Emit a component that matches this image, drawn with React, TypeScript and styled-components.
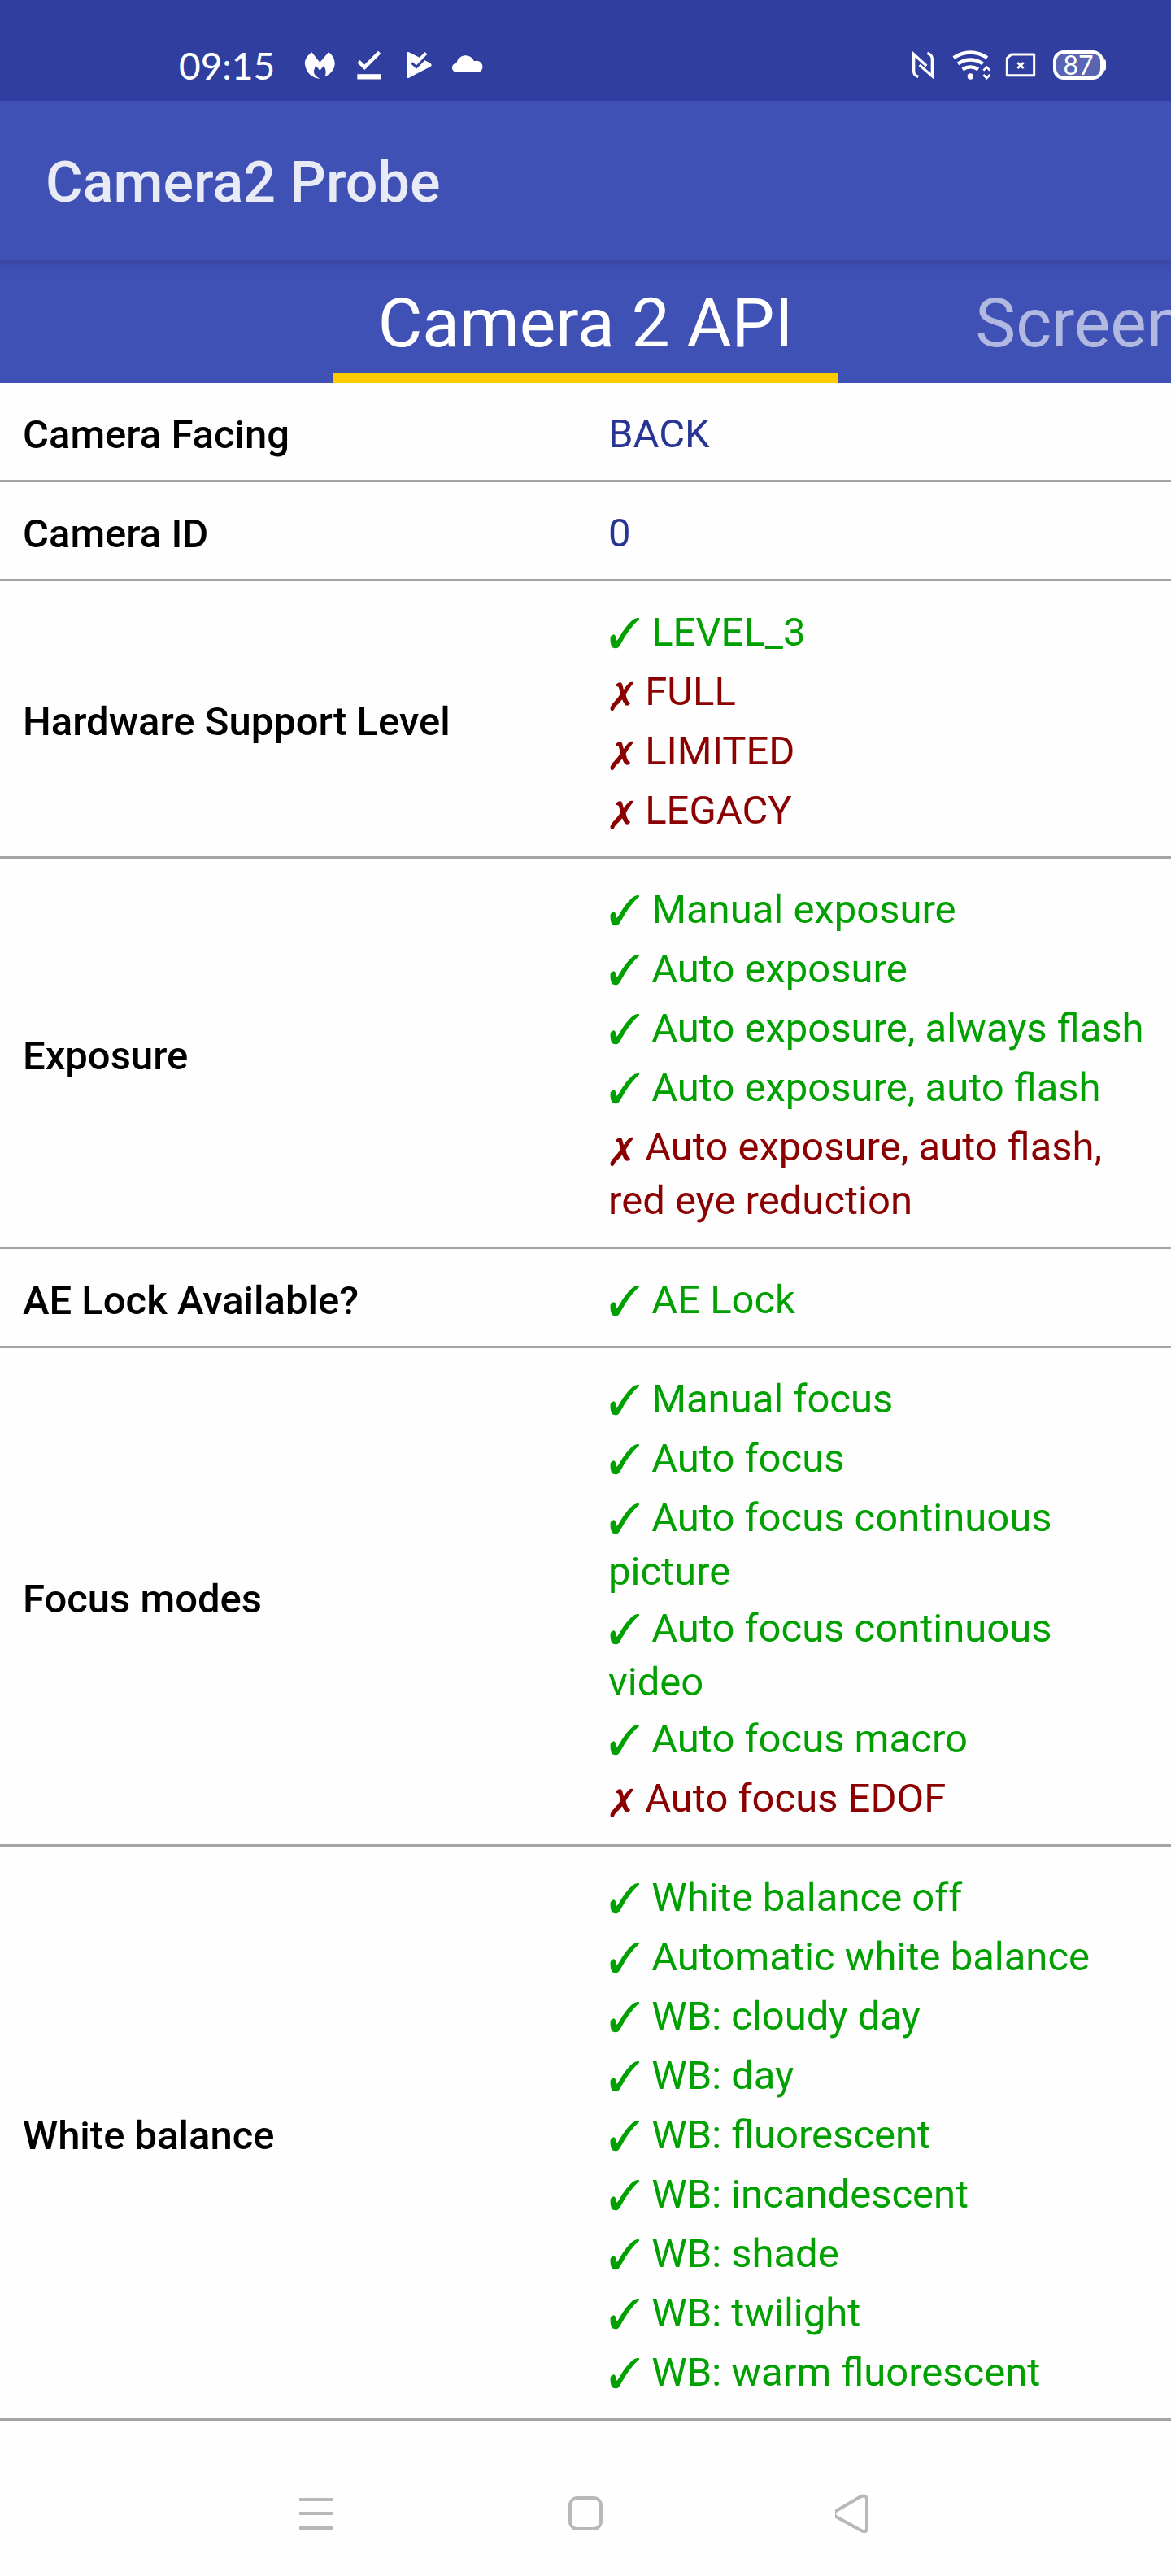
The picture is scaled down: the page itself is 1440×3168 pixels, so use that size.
import React from "react";
import styled, { createGlobalStyle, css } from "styled-components";

const GlobalStyle = createGlobalStyle`
  *, *::before, *::after { box-sizing: border-box; }
  body { margin: 0; background: #fefefe; font-family: Roboto, "Noto Sans", sans-serif; }
  button { margin: 0; padding: 0; border: 0; background: none; font: inherit; color: inherit; }
`;

const Page = styled.div`
  display: flex;
  flex-direction: column;
  min-height: 100vh;
  overflow-x: hidden;
`;

const StatusBar = styled.div`
  display: flex;
  align-items: center;
  justify-content: space-between;
  height: 124px;
  padding: 36px 80px 0 220px;
  background: #303f9f;
  color: #fff;
`;

const StatusGroup = styled.div<{ $gap: number }>`
  display: flex;
  align-items: center;
  gap: ${(p) => p.$gap}px;
`;

const Clock = styled.time`
  margin-right: 14px;
  padding-top: 2px;
  font: 400 46px/56px Lato, sans-serif;
`;

const Glyph = styled.svg<{ $width?: number }>`
  display: block;
  flex: none;
  width: ${(p) => p.$width ?? 40}px;
  height: 40px;
`;

const Battery = styled.div`
  display: flex;
  align-items: center;
  margin-left: 4px;
`;

const BatteryBody = styled.div`
  display: flex;
  align-items: center;
  justify-content: center;
  width: 62px;
  height: 36px;
  border: 4px solid #fff;
  border-radius: 13px;
  background: #5965b2;
  font: 400 32px/28px Lato, sans-serif;
`;

const BatteryTip = styled.div`
  width: 3px;
  height: 14px;
  border-radius: 0 3px 3px 0;
  background: #fff;
`;

const AppBar = styled.header`
  display: flex;
  align-items: center;
  height: 196px;
  padding: 4px 56px 0;
  background: #3f51b5;
`;

const Title = styled.h1`
  margin: 0;
  color: #e8eaf6;
  font-size: 70px;
  line-height: 82px;
  font-weight: 500;
`;

const Tabs = styled.nav`
  display: grid;
  grid-template-columns: minmax(0, 1fr) auto minmax(0, 1fr);
  height: 151px;
  overflow: hidden;
  background: linear-gradient(#3a489f, #3d4cb0 8px, #3f51b5 18px);
`;

const Tab = styled.button<{ $active?: boolean }>`
  height: 151px;
  padding: 4px 56px 0;
  font-size: 84px;
  line-height: 98px;
  white-space: nowrap;
  color: #b2b9e1;
  text-align: left;
  ${(p) =>
    p.$active
      ? css`
          grid-column: 2;
          padding-top: 16px;
          border-bottom: 12px solid #ffcc00;
          color: #fff;
        `
      : css`
          margin-left: 112px;
        `}
`;

const Main = styled.main`
  flex: 1;
`;

const Table = styled.table`
  width: 100%;
  table-layout: fixed;
  border-collapse: separate;
  border-spacing: 0;
  font-size: 49px;
  line-height: 63px;
`;

const Name = styled.th`
  padding: 28px 28px 21px;
  border-bottom: 3px solid #a4a4a4;
  color: #000;
  font-weight: 500;
  text-align: left;
  vertical-align: middle;
`;

const Value = styled.td`
  padding: 24px 28px 22px;
  border-bottom: 3px solid #a4a4a4;
  color: #283593;
  vertical-align: middle;
`;

const List = styled.ul`
  margin: 0;
  padding: 0;
  list-style: none;
`;

/* The struts make the line that holds the mark taller than a wrapped line. */
const Item = styled.li<{ $state?: "yes" | "no" }>`
  color: ${(p) => (p.$state === "yes" ? "#00a000" : p.$state === "no" ? "#8b0000" : "inherit")};
  &::before {
    content: "";
    display: inline-block;
    height: 73px;
    vertical-align: -18px;
  }
  &:last-child::after {
    content: "";
    display: inline-block;
    height: 18px;
    vertical-align: -18px;
  }
`;

const Mark = styled.svg<{ $width: number; $weight: number }>`
  width: ${(p) => p.$width}px;
  height: 50px;
  fill: currentColor;
  stroke: currentColor;
  stroke-width: ${(p) => p.$weight};
  stroke-linejoin: round;
  vertical-align: -10px;
`;

const NavBar = styled.nav`
  display: flex;
  align-items: center;
  justify-content: center;
  gap: 283px;
  height: 154px;
`;

const NavButton = styled.button`
  width: 48px;
  height: 48px;
`;

const NavIcon = styled.svg`
  display: block;
  width: 48px;
  height: 48px;
  fill: none;
  stroke: #b8b8b8;
  stroke-width: 4;
  stroke-linejoin: round;
`;

function CheckMark() {
  return (
    <Mark $width={41} $weight={4} viewBox="84 73 123 150" role="img" aria-label="Supported">
      <path d="M94 162Q97 155 104 154Q109 155 110 166Q111 175 115 177Q121 174 128 160Q150 123 174 101Q186 91 196 93Q197 95 193 98Q160 128 130 183Q122 198 117 200Q109 202 102 199Q97 196 95 184Q93 174 94 162Z" />
    </Mark>
  );
}

function CrossMark() {
  return (
    <Mark $width={33} $weight={7} viewBox="83 290 99 150" role="img" aria-label="Not supported">
      <path d="M116 335Q122 329 129 331Q132 334 133 342Q136 354 139 361Q150 342 161 332Q166 328 171 329Q170 332 167 335Q155 349 144 370Q147 386 152 396Q155 402 160 404Q158 409 152 409Q147 408 144 402Q139 393 136 382Q124 398 111 410Q104 417 101 425Q99 428 96 428Q93 425 95 418Q98 409 107 401Q121 387 132 370Q128 355 125 344Q122 338 116 338Z" />
    </Mark>
  );
}

type Entry = { text: string; state?: "yes" | "no" };
const yes = (text: string): Entry => ({ text, state: "yes" });
const no = (text: string): Entry => ({ text, state: "no" });

const rows: { name: string; values: Entry[] }[] = [
  { name: "Camera Facing", values: [{ text: "BACK" }] },
  { name: "Camera ID", values: [{ text: "0" }] },
  { name: "Hardware Support Level", values: [yes("LEVEL_3"), no("FULL"), no("LIMITED"), no("LEGACY")] },
  {
    name: "Exposure",
    values: [
      yes("Manual exposure"),
      yes("Auto exposure"),
      yes("Auto exposure, always flash"),
      yes("Auto exposure, auto flash"),
      no("Auto exposure, auto flash, red eye reduction"),
    ],
  },
  { name: "AE Lock Available?", values: [yes("AE Lock")] },
  {
    name: "Focus modes",
    values: [
      yes("Manual focus"),
      yes("Auto focus"),
      yes("Auto focus continuous picture"),
      yes("Auto focus continuous video"),
      yes("Auto focus macro"),
      no("Auto focus EDOF"),
    ],
  },
  {
    name: "White balance",
    values: [
      yes("White balance off"),
      yes("Automatic white balance"),
      yes("WB: cloudy day"),
      yes("WB: day"),
      yes("WB: fluorescent"),
      yes("WB: incandescent"),
      yes("WB: shade"),
      yes("WB: twilight"),
      yes("WB: warm fluorescent"),
    ],
  },
];

export default function App() {
  return (
    <Page>
      <GlobalStyle />
      <StatusBar>
        <StatusGroup $gap={21}>
          <Clock>09:15</Clock>
          <Glyph viewBox="514 60 120 120" fill="#fff" aria-hidden="true">
            <path d="M545 73C525 88 518 105 520 118C524 148 545 168 576 171C562 164 553 155 553 145C553 138 556 130 560 122L575 140L590 122C598 138 599 150 593 163C615 154 630 135 630 115C630 98 622 83 607 73L575 110Z" />
          </Glyph>
          <Glyph viewBox="699 60 120 120" fill="none" stroke="#fff" aria-hidden="true">
            <path d="M720 107L742 128L797 73" strokeWidth="14" />
            <path d="M715 163H803" strokeWidth="19" />
          </Glyph>
          <Glyph viewBox="881 60 120 120" fill="#fff" aria-hidden="true">
            <path d="M898 76Q898 70 905 73L984 113Q992 120 984 126L905 167Q898 170 898 164Z" />
            <path d="M932 112L968 76" fill="none" stroke="#fff" strokeWidth="12" />
            <path d="M915 112L932 128L962 97" fill="none" stroke="#303f9f" strokeWidth="9" />
          </Glyph>
          <Glyph viewBox="1063 60 120 120" fill="#fff" aria-hidden="true">
            <path d="M1081 147A17 17 0 0 1 1079 113A34 34 0 0 1 1144 106A21 21 0 0 1 1162 147Z" />
          </Glyph>
        </StatusGroup>
        <StatusGroup $gap={16}>
          <Glyph viewBox="45 60 120 120" fill="none" stroke="#fff" strokeWidth="10" aria-hidden="true">
            <path d="M88 163Q72 158 71 145V80L118 123M121 76Q138 82 139 96V161L92 120" />
          </Glyph>
          <Glyph $width={48} viewBox="214 60 144 120" fill="none" stroke="#fff" aria-hidden="true">
            <path d="M219 93Q281 54 343 93M235 115Q281 86 327 115M252 136Q281 118 310 136" strokeWidth="13" />
            <circle cx="281" cy="162" r="11" fill="#fff" stroke="none" />
            <path d="M329 140L341 128L353 140M329 156L341 168L353 156" strokeWidth="8" />
          </Glyph>
          <Glyph viewBox="402 60 120 120" fill="none" stroke="#fff" aria-hidden="true">
            <path d="M412 158V95L428 81H512V158Z" strokeWidth="9" strokeLinejoin="round" />
            <path d="M451 111L473 132M473 111L451 132" strokeWidth="9" />
          </Glyph>
          <Battery>
            <BatteryBody>87</BatteryBody>
            <BatteryTip />
          </Battery>
        </StatusGroup>
      </StatusBar>
      <AppBar>
        <Title>Camera2 Probe</Title>
      </AppBar>
      <Tabs>
        <Tab $active>Camera 2 API</Tab>
        <Tab>Screen</Tab>
      </Tabs>
      <Main>
        <Table>
          <tbody>
            {rows.map((row) => (
              <tr key={row.name}>
                <Name scope="row">{row.name}</Name>
                <Value>
                  <List>
                    {row.values.map((v) => (
                      <Item key={v.text} $state={v.state}>
                        {v.state === "yes" && <CheckMark />}
                        {v.state === "no" && <CrossMark />}
                        {v.state ? " " : ""}
                        {v.text}
                      </Item>
                    ))}
                  </List>
                </Value>
              </tr>
            ))}
          </tbody>
        </Table>
      </Main>
      <NavBar>
        <NavButton aria-label="Recent apps">
          <NavIcon viewBox="0 0 48 48">
            <path d="M3 7H45M3 24H45M3 42H45" />
          </NavIcon>
        </NavButton>
        <NavButton aria-label="Home">
          <NavIcon viewBox="0 0 48 48">
            <rect x="5" y="5" width="38" height="38" rx="9" />
          </NavIcon>
        </NavButton>
        <NavButton aria-label="Back">
          <NavIcon viewBox="0 0 48 48">
            <path d="M1 21L32 3Q38 1 39 6V43Q38 48 32 45L1 28Q-3 24 1 21Z" overflow="visible" />
          </NavIcon>
        </NavButton>
      </NavBar>
    </Page>
  );
}
